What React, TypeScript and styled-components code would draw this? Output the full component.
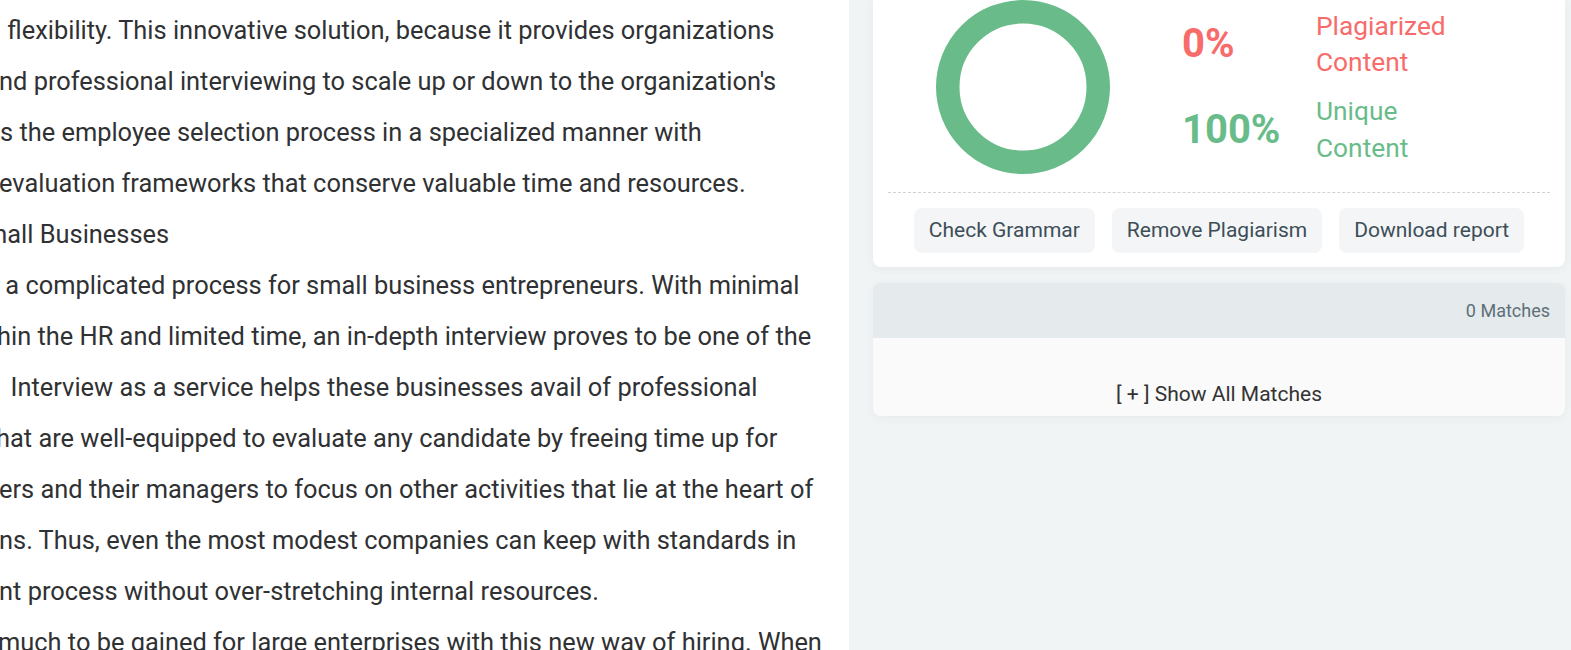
import React from 'react';
import styled, { createGlobalStyle } from 'styled-components';

const GlobalStyle = createGlobalStyle`
  html, body {
    margin: 0;
    padding: 0;
    height: 100%;
    overflow: hidden;
  }
  body {
    font-family: Roboto, "Liberation Sans", Arial, sans-serif;
    background: #f1f4f5;
  }
`;

const Layout = styled.div`
  display: grid;
  grid-template-columns: 849px 1fr;
  min-height: 100vh;
`;

const EditorPane = styled.div`
  background: #ffffff;
  overflow: hidden;
  padding-top: 5px;
`;

const TextLine = styled.div<{ $indent: number }>`
  font-size: 25.4px;
  line-height: 51px;
  color: #2f3133;
  white-space: pre;
  text-indent: ${props => props.$indent}px;
`;

const ResultPane = styled.div`
  background: #f1f4f5;
  padding: 0 6px 0 24px;
  display: flex;
  flex-direction: column;
  gap: 16px;
`;

const ScoreCard = styled.div`
  background: #ffffff;
  border-radius: 0 0 8px 8px;
  box-shadow: 0 2px 10px rgba(40, 60, 70, 0.06);
  padding: 0 15px 14px;
`;

const ScoreRow = styled.div`
  display: flex;
  align-items: center;
  height: 174px;
  padding-left: 48px;
  gap: 72px;
`;

const StatsGrid = styled.div`
  display: grid;
  grid-template-columns: 134px auto;
  row-gap: 12px;
  align-items: center;
`;

const Percent = styled.div<{ $color: string }>`
  font-size: 40px;
  font-weight: 700;
  line-height: 1;
  color: ${props => props.$color};
`;

const StatLabel = styled.div<{ $color: string }>`
  font-size: 26.3px;
  line-height: 36.6px;
  color: ${props => props.$color};
`;

const Divider = styled.div`
  margin-top: 18px;
  border-top: 1px dashed #cfd3d6;
`;

const ActionRow = styled.div`
  display: flex;
  justify-content: center;
  gap: 17px;
  margin-top: 15px;
`;

const ActionButton = styled.button`
  height: 45px;
  padding: 0 15px 1px;
  border: none;
  border-radius: 8px;
  background: #f3f5f7;
  color: #3d4e57;
  font-family: Roboto, "Liberation Sans", Arial, sans-serif;
  font-size: 21px;
  cursor: pointer;
`;

const MatchesCard = styled.div`
  border-radius: 8px;
  overflow: hidden;
  box-shadow: 0 2px 10px rgba(40, 60, 70, 0.05);
`;

const MatchesHeader = styled.div`
  height: 55px;
  background: #e5eaec;
  display: flex;
  align-items: center;
  justify-content: flex-end;
  padding: 0 15px 1px 0;
  box-sizing: border-box;
  font-size: 18px;
  color: #5d7079;
`;

const MatchesBody = styled.div`
  background: #fafafa;
  padding: 44px 0 10px;
  text-align: center;
  font-size: 21px;
  line-height: 24px;
  color: #333333;
`;

const GREEN = '#69bc8a';
const RED = '#f76c6b';

const lines: Array<[string, number]> = [
  [' flexibility. This innovative solution, because it provides organizations', 1],
  ['nd professional interviewing to scale up or down to the organization\'s', -1],
  ['s the employee selection process in a specialized manner with', 0],
  ['evaluation frameworks that conserve valuable time and resources.', -1],
  ['mall Businesses', -15],
  [' a complicated process for small business entrepreneurs. With minimal', -1],
  ['hin the HR and limited time, an in-depth interview proves to be one of the', -3],
  ['  Interview as a service helps these businesses avail of professional', -2],
  ['hat are well-equipped to evaluate any candidate by freeing time up for', -4],
  ['ers and their managers to focus on other activities that lie at the heart of', -1],
  ['ns. Thus, even the most modest companies can keep with standards in', -1],
  ['nt process without over-stretching internal resources.', -1],
  ['much to be gained for large enterprises with this new way of hiring. When', -2],
];

const Donut: React.FC<{ percent: number }> = ({ percent }) => {
  const r = 75.25;
  const c = 2 * Math.PI * r;
  return (
    <svg width="174" height="174" viewBox="0 0 174 174">
      <circle cx="87" cy="87" r={r} fill="none" stroke={GREEN} strokeWidth="23.5" />
      {percent > 0 && (
        <circle
          cx="87"
          cy="87"
          r={r}
          fill="none"
          stroke={RED}
          strokeWidth="23.5"
          strokeDasharray={`${(c * percent) / 100} ${c}`}
          transform="rotate(-90 87 87)"
        />
      )}
    </svg>
  );
};

export default function App() {
  return (
    <>
      <GlobalStyle />
      <Layout>
        <EditorPane>
          {lines.map(([text, indent], i) => (
            <TextLine key={i} $indent={indent}>{text}</TextLine>
          ))}
        </EditorPane>

        <ResultPane>
          <ScoreCard>
            <ScoreRow>
              <Donut percent={0} />
              <StatsGrid>
                <Percent $color={RED}>0%</Percent>
                <StatLabel $color={RED}>Plagiarized<br />Content</StatLabel>
                <Percent $color={GREEN}>100%</Percent>
                <StatLabel $color={GREEN}>Unique<br />Content</StatLabel>
              </StatsGrid>
            </ScoreRow>
            <Divider />
            <ActionRow>
              <ActionButton>Check Grammar</ActionButton>
              <ActionButton>Remove Plagiarism</ActionButton>
              <ActionButton>Download report</ActionButton>
            </ActionRow>
          </ScoreCard>

          <MatchesCard>
            <MatchesHeader>0 Matches</MatchesHeader>
            <MatchesBody>[ + ] Show All Matches</MatchesBody>
          </MatchesCard>
        </ResultPane>
      </Layout>
    </>
  );
}
